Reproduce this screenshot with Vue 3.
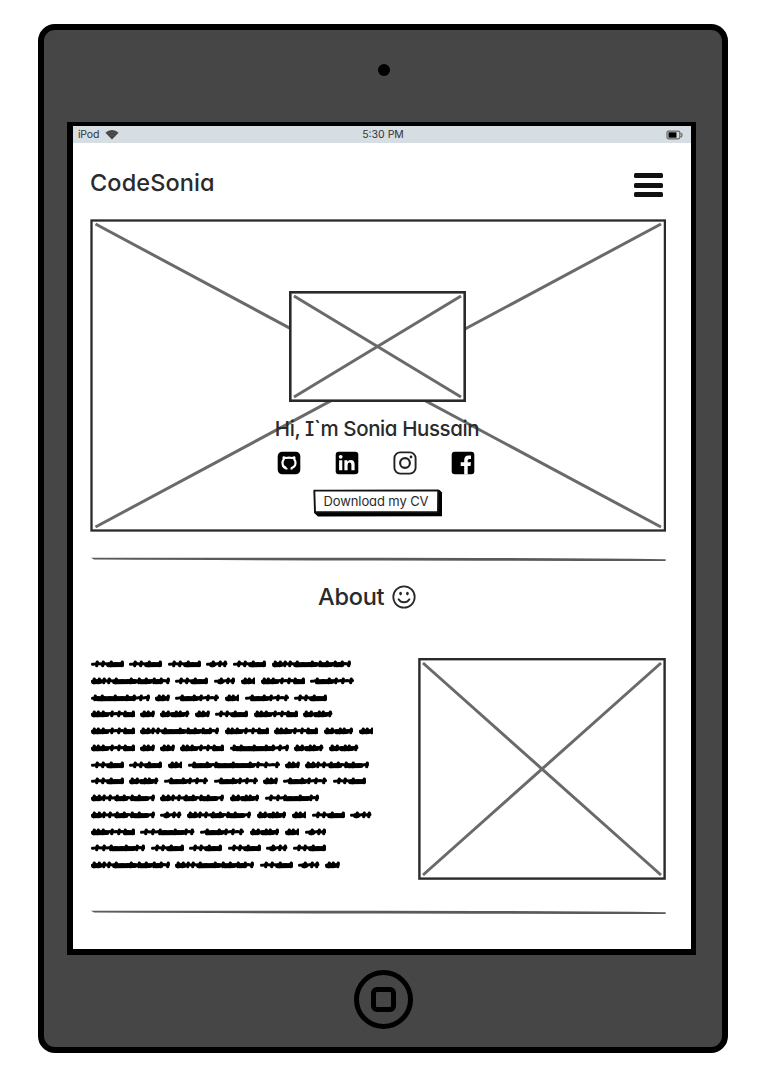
<script setup>
// Word widths of the scribbled placeholder copy, keyed by word shape
const widths = { A: 33, B: 21.5, C: 79, D: 14.5, E: 44, F: 44, G: 29.5, H: 59, I: 54.5, J: 64, K: 92 }

const rows = [
  'AAABAC', 'CABDFE', 'HDEDEA', 'FDGDAFG', 'FCFFGD', 'FDDFHGG', 'AADKDJ',
  'AGEEDEA', 'JJGI', 'JBJGDAB', 'FIEGDB', 'IAAABA', 'CCABD',
]

// Each shape is a thin tapered core, heavy low passes and short upright ticks
const marks = {
  A: { ticks: [6, 12, 20, 31], heavy: [[16, 31]] },
  B: { ticks: [7, 14, 19], heavy: [[4, 8]] },
  C: { ticks: [3, 8, 13, 18, 25, 40, 48, 55, 63, 70, 77], heavy: [[1, 9], [22, 44], [48, 59], [63, 70]] },
  D: { ticks: [4, 8, 13], heavy: [[1, 10]] },
  E: { ticks: [7, 19, 26, 33, 41], heavy: [[6, 22]] },
  F: { ticks: [3, 7, 12, 21, 28, 34, 42], heavy: [[1, 16], [33, 43]] },
  G: { ticks: [3, 8, 16, 20, 27], heavy: [[1, 8], [11, 23]] },
  H: { ticks: [4, 11, 24, 36, 43, 50, 57], heavy: [[5, 43]] },
  I: { ticks: [6, 13, 20, 35, 46, 52], heavy: [[20, 43]] },
  J: { ticks: [3, 8, 13, 19, 26, 33, 41, 48, 62], heavy: [[1, 9], [24, 35], [42, 56]] },
  K: { ticks: [6, 19, 28, 45, 62, 70, 78, 89], heavy: [[5, 22], [28, 65]] },
}

const core = (k) => {
  const w = widths[k]
  let d = 'M1.5 6.3'
  for (let x = 4; x < w - 2; x += 3) d += ` L${x} ${x % 2 ? 5.6 : 6.1}`
  return d + ` L${w - 1.5} 5.6`
}
const heavy = (k) => marks[k].heavy.map(([a, b]) => `M${a + 1.5} 6.9 L${b} 6.6`).join(' ')
const ticks = (k) => marks[k].ticks.map((x) => `M${x - 0.3} 7.7 L${x + 0.3} 4.1`).join(' ')
</script>

<template>
  <div class="page">
    <div class="tablet">
      <div class="camera"></div>

      <div class="screen">
        <div class="status">
          <div class="carrier">
            <span>iPod</span>
            <svg width="14" height="11" viewBox="0 0 14 11">
              <path d="M7 10.5 L.4 3.8 Q3.2 1 7 1 T13.6 3.8 Z" fill="#444" />
              <path d="M2 5.2 Q7 1.6 12 5.2 M3.8 7.2 Q7 5 10.2 7.2" fill="none" stroke="#666d72" stroke-width=".4" />
            </svg>
          </div>
          <span class="clock">5:30 PM</span>
          <svg class="battery" width="17" height="10" viewBox="0 0 17 10">
            <rect x="1" y="1.2" width="12.8" height="7.6" rx="1.5" fill="#d5dde3" stroke="#666" stroke-width="1.2" />
            <rect x="2.5" y="2.3" width="8" height="5.4" fill="#000" />
            <path d="M14.3 3 Q16 3 16 5 T14.3 7" fill="none" stroke="#666" stroke-width="1.2" />
          </svg>
        </div>

        <main class="content">
          <header class="topbar">
            <span class="brand">CodeSonia</span>
            <div class="menu"><i></i><i></i><i></i></div>
          </header>

          <section class="hero">
            <svg class="cross" width="576" height="313" viewBox="0 0 576 313">
              <rect x="1.5" y="1.5" width="573.4" height="310" fill="#fff" stroke="#2a2a2a" stroke-width="2.3" />
              <path d="M5.5 5 L571 308 M571 5 L5.5 308" stroke="#6a6a6a" stroke-width="3" />
            </svg>
            <div class="intro">
              <svg class="photo" width="177" height="111" viewBox="0 0 177 111">
                <rect x="1.3" y="1.3" width="174.4" height="108.4" fill="#fff" stroke="#2a2a2a" stroke-width="2.6" />
                <path d="M5 5 L172 106 M172 5 L5 106" stroke="#6a6a6a" stroke-width="3" />
              </svg>
              <div class="hello">Hi, I`m Sonia Hussain</div>
              <div class="social">
                <svg width="24" height="24" viewBox="0 0 24 24">
                  <rect x=".7" y=".7" width="22.6" height="22.6" rx="4.5" fill="#000" />
                  <path d="M9.4 17 Q5.5 15.6 5.5 11.7 Q5.5 9.9 6.7 8.6 L6.6 6.4 L9.2 7 Q12 6.3 14.8 7 L17.4 6.4 L17.3 8.6 Q18.5 9.9 18.5 11.7 Q18.5 15.6 14.6 17 V18.6 M9.4 18.6 V17" fill="none" stroke="#fff" stroke-width="2.2" stroke-linejoin="round" />
                  <path d="M5.2 15.4 Q6.8 18 9.4 17.5" fill="none" stroke="#fff" stroke-width="1" />
                </svg>
                <svg width="24" height="24" viewBox="0 0 24 24">
                  <rect x=".7" y=".7" width="22.6" height="22.6" rx="3" fill="#000" />
                  <circle cx="5.7" cy="5.8" r="1.9" fill="#fff" />
                  <path d="M4.1 9.2 H7.3 V19.3 H4.1 Z M9.4 9.2 H12.4 V10.7 Q13.4 8.9 15.7 8.9 Q19.6 8.9 19.6 13.3 V19.3 H16.4 V13.9 Q16.4 11.6 14.6 11.6 Q12.6 11.6 12.6 13.9 V19.3 H9.4 Z" fill="#fff" />
                </svg>
                <svg width="24" height="24" viewBox="0 0 24 24" fill="none" stroke="#222">
                  <rect x="1.4" y="1.4" width="21.2" height="21.2" rx="5.8" fill="#fff" stroke-width="1.9" />
                  <circle cx="12" cy="12" r="4.9" stroke-width="2.1" />
                  <circle cx="18" cy="6" r="1.4" fill="#222" stroke="none" />
                </svg>
                <svg width="24" height="24" viewBox="0 0 24 24">
                  <rect x=".7" y=".7" width="22.6" height="22.6" rx="3" fill="#000" />
                  <path d="M13.2 23.4 V14.9 H9.7 V11.3 H13.2 V9.2 Q13.2 4.5 17.5 4.5 H20 V8 H18.1 Q16.7 8 16.7 9.5 V11.3 H20 L19.5 14.9 H16.7 V23.4 Z" fill="#fff" />
                </svg>
              </div>
              <div class="cv">
                <svg width="130" height="28" viewBox="0 0 130 28">
                  <path d="M1 1.4 L126.6 1 L129 3.4 L129 27.2 L5 27.4 L1.2 24 Z" fill="#000" />
                  <path d="M1.3 1.6 L125.2 1.4 L125 23.2 L2 23.2 Z" fill="#fff" stroke="#111" stroke-width="1.9" stroke-linejoin="round" />
                </svg>
                <span>Download my CV</span>
              </div>
            </div>
          </section>

          <svg class="rule" width="576" height="5" viewBox="0 0 576 5">
            <path d="M1 .8 Q100 .7 288 .8 T575 2.2 Q577 2.8 575 4 Q420 3.6 288 3.4 T4 2.6 Z" fill="#5a5a5a" />
          </svg>

          <div class="about-title">
            <span>About</span>
            <svg width="24" height="24" viewBox="0 0 24 24" fill="none" stroke="#2a2a2a">
              <circle cx="12" cy="12" r="10.7" stroke-width="1.8" />
              <path d="M6.6 14.2 Q8.4 17.3 12 17.3 T17.4 14.2" stroke-width="1.9" stroke-linecap="round" />
              <ellipse cx="8.6" cy="8.6" rx="1.4" ry="1.8" fill="#2a2a2a" stroke="none" />
              <ellipse cx="15.4" cy="8.6" rx="1.4" ry="1.8" fill="#2a2a2a" stroke="none" />
            </svg>
          </div>

          <section class="about">
            <div class="copy">
              <div v-for="(row, r) in rows" :key="r" class="row">
                <svg v-for="(k, i) in row" :key="i" :width="widths[k]" height="12" :viewBox="`0 0 ${widths[k]} 12`">
                  <path :d="core(k)" class="core" />
                  <path :d="heavy(k)" class="heavy" />
                  <path :d="ticks(k)" class="tick" />
                </svg>
              </div>
            </div>
            <svg width="248" height="222" viewBox="0 0 248 222">
              <rect x="1.4" y="1.2" width="245.2" height="219.4" fill="#fff" stroke="#2a2a2a" stroke-width="2.4" />
              <path d="M5 5 L243 217 M243 5 L5 217" stroke="#6a6a6a" stroke-width="3" />
            </svg>
          </section>

          <svg class="rule last" width="576" height="5" viewBox="0 0 576 5">
            <path d="M1 .8 Q100 .7 288 .8 T575 2.2 Q577 2.8 575 4 Q420 3.6 288 3.4 T4 2.6 Z" fill="#5a5a5a" />
          </svg>
        </main>
      </div>

      <div class="home"><div></div></div>
    </div>
  </div>
</template>

<style>
body {
  background: #fff;
}
</style>

<style scoped>
.page {
  box-sizing: border-box;
  width: 766px;
  height: 1078px;
  padding: 24px 38px;
  color: #2a2a2a;
  font-family: Inter, "Noto Sans", sans-serif;
  font-weight: 500;
  font-feature-settings: "cv11", "cv08";
}
.page svg {
  display: block;
  flex: none;
}
.tablet {
  box-sizing: border-box;
  width: 690px;
  height: 1029px;
  border: 6px solid #000;
  border-radius: 17px;
  background: #464646;
  display: flex;
  flex-direction: column;
  align-items: center;
}
.camera {
  width: 12px;
  height: 12px;
  margin: 34px 0 0 1px;
  border-radius: 50%;
  background: #000;
}
.screen {
  box-sizing: border-box;
  width: 629px;
  height: 833px;
  margin: 46px 3px 0 0;
  border: solid #000;
  border-width: 4px 5px 6px 6px;
  background: #fff;
}
.status {
  display: grid;
  grid-template-columns: 1fr auto 1fr;
  align-items: center;
  height: 17px;
  padding: 0 8px 0 5px;
  background: #d6dee3;
  font-size: 10.5px;
  font-weight: 400;
  line-height: 15px;
  color: #333;
}
.carrier {
  display: flex;
  align-items: center;
  gap: 6px;
  letter-spacing: -0.2px;
}
.clock {
  margin: 0 0 1px 5px;
}
.battery {
  justify-self: end;
}
.content {
  padding: 0 25px 0 17px;
}
.topbar {
  display: flex;
  justify-content: space-between;
  height: 76px;
  padding-right: 3px;
}
.brand {
  margin-top: 23.5px;
  font-size: 23.5px;
  line-height: 32px;
  letter-spacing: 0.1px;
}
.menu {
  display: flex;
  flex-direction: column;
  gap: 4.6px;
  margin-top: 30px;
}
.menu i {
  width: 29px;
  height: 5px;
  border-radius: 1.5px;
  background: #111;
}
.hero {
  display: grid;
  width: 576px;
  height: 313px;
}
.hero > * {
  grid-area: 1 / 1;
}
.intro {
  display: flex;
  flex-direction: column;
  align-items: center;
  padding-top: 72px;
}
.photo {
  margin-right: 1px;
}
.hello {
  margin: 14px 2px 0 0;
  font-size: 20.5px;
  line-height: 26px;
  letter-spacing: -0.4px;
  white-space: nowrap;
}
.social {
  display: flex;
  gap: 34.2px;
  margin-top: 9px;
  margin-right: 4px;
}
.cv {
  display: grid;
  place-items: center;
  margin-top: 13.5px;
  margin-right: 1px;
}
.cv > * {
  grid-area: 1 / 1;
}
.cv span {
  margin: 0 3px 3px 0;
  font-size: 13px;
  font-weight: 400;
  line-height: 18px;
  letter-spacing: -0.1px;
  white-space: nowrap;
}
.rule {
  margin-top: 25px;
}
.about-title {
  display: flex;
  align-items: center;
  gap: 8px;
  height: 32px;
  margin: 19px 0 0 228px;
  font-size: 23.5px;
  line-height: 32px;
  letter-spacing: -0.25px;
}
.about {
  display: flex;
  justify-content: space-between;
  height: 222px;
  margin: 45px 0 0 0.5px;
}
.copy {
  display: flex;
  flex-direction: column;
  gap: 4.75px;
}
.row {
  display: flex;
  gap: 5.5px;
}
.core,
.heavy,
.tick {
  fill: none;
  stroke: #000;
  stroke-linecap: round;
}
.core {
  stroke-width: 3;
}
.heavy {
  stroke-width: 4.8;
}
.tick {
  stroke-width: 3.2;
}
.rule.last {
  margin-top: 30px;
}
.home {
  box-sizing: border-box;
  display: grid;
  place-items: center;
  width: 59px;
  height: 59px;
  margin: 15px 0 0 1px;
  border: 5.5px solid #000;
  border-radius: 50%;
}
.home div {
  box-sizing: border-box;
  width: 25px;
  height: 25px;
  border: 5.5px solid #000;
  border-radius: 6px;
}
</style>
